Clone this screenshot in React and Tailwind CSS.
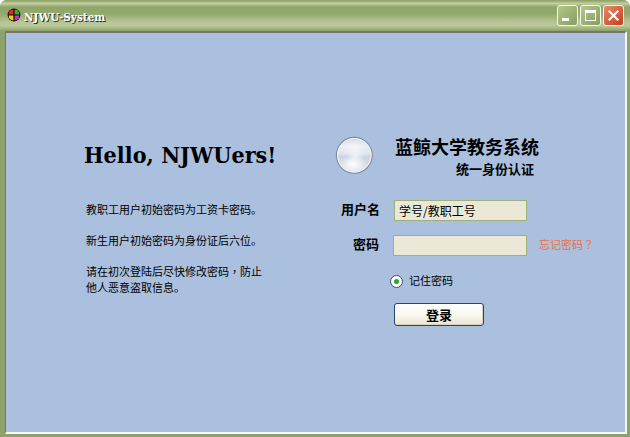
function AppIcon() {
  return (
    <svg className="-mt-px size-[14px] shrink-0" viewBox="0 0 14 14">
      <circle cx="7" cy="7" r="6.4" fill="#111" />
      <path d="M6.4 6.4V1.6A5 5 0 0 0 1.6 6.4Z" fill="#e42a1c" />
      <path d="M7.6 6.4V1.6a5 5 0 0 1 4.8 4.8Z" fill="#38a838" />
      <path d="M6.4 7.6v4.8A5 5 0 0 1 1.6 7.6Z" fill="#e6d21c" />
      <path d="M7.6 7.6v4.8a5 5 0 0 0 4.8-4.8Z" fill="#c92bc9" />
    </svg>
  );
}

function Orb() {
  return (
    <svg className="size-[38px] shrink-0" viewBox="0 0 38 38">
      <defs>
        <linearGradient id="orb" x1="0" y1="0" x2="0" y2="1">
          <stop offset="0" stopColor="#d3dae4" />
          <stop offset=".25" stopColor="#e8ecf2" />
          <stop offset=".46" stopColor="#e0e5ed" />
          <stop offset=".54" stopColor="#ccd4e0" />
          <stop offset="1" stopColor="#e3e8ef" />
        </linearGradient>
        <radialGradient id="glow">
          <stop offset="0" stopColor="#fff" />
          <stop offset="1" stopColor="#fff" stopOpacity="0" />
        </radialGradient>
      </defs>
      <circle cx="19.3" cy="19.3" r="17.9" fill="url(#orb)" stroke="#7f8da6" strokeWidth="1.2" />
      <circle cx="19.3" cy="19.3" r="16.8" fill="none" stroke="#f1f4f8" strokeWidth="1" />
      <ellipse cx="18" cy="28" rx="14" ry="9" fill="url(#glow)" />
      <ellipse cx="21" cy="20" rx="9" ry="7" fill="url(#glow)" opacity=".6" />
      <ellipse cx="19" cy="12" rx="14" ry="8" fill="url(#glow)" opacity=".6" />
    </svg>
  );
}

const controlBase = "flex size-[21px] items-center justify-center rounded-[3px] border border-[#f4f8e6]";
const controlGreen = " bg-linear-to-br from-[#b5c68c] to-[#869e60]";

function WindowControls() {
  return (
    <div className="flex gap-[2px]">
      <button className={controlBase + controlGreen}>
        <svg className="size-[19px]" viewBox="0 0 19 19"><path d="M4 12h7v3H4z" fill="#fff" /></svg>
      </button>
      <button className={controlBase + controlGreen}>
        <svg className="size-[19px]" viewBox="0 0 19 19"><path d="M4 4h11v11H4zM5 7v7h9V7z" fill="#fff" fillRule="evenodd" /></svg>
      </button>
      <button className={controlBase + " bg-linear-to-br from-[#e8886a] to-[#c33a1c]"}>
        <svg className="size-[19px]" viewBox="0 0 19 19"><path d="M4.7 4.7l9.6 9.6M14.3 4.7l-9.6 9.6" stroke="#fff" strokeWidth="2.2" /></svg>
      </button>
    </div>
  );
}

function Notice() {
  return (
    <section className="w-[252px] shrink-0 pl-[78px] pt-[106px]">
      <h1 className="h-8 whitespace-nowrap font-['DejaVu_Serif_Condensed','DejaVu_Serif'] text-[23px] font-bold leading-8 tracking-[0.07px] [font-stretch:condensed]">
        Hello, NJWUers!
      </h1>
      <div className="flex w-[190px] flex-col gap-[15px] pl-[2px] pt-[30px] text-[11px] leading-4">
        <p>教职工用户初始密码为工资卡密码。</p>
        <p>新生用户初始密码为身份证后六位。</p>
        <p>请在初次登陆后尽快修改密码<span lang="zh-TW" className="font-['Noto_Sans_CJK_TC',sans-serif]">，</span>防止<br />他人恶意盗取信息。</p>
      </div>
    </section>
  );
}

function LoginForm() {
  return (
    <section className="ml-[77px] pt-[102px]">
      <header className="flex">
        <div className="pt-px">
          <Orb />
        </div>
        <div className="w-[205px] pl-[22px] font-bold">
          <h2 className="whitespace-nowrap text-[18px] leading-[22px]">蓝鲸大学教务系统</h2>
          <p className="pl-[61px] text-[13px] leading-6">统一身份认证</p>
        </div>
      </header>
      <div className="mt-[19px] flex h-[21px] items-center">
        <label className="-mt-[3px] w-[45px] text-right text-[13px] font-bold leading-5">用户名</label>
        <input
          className="ml-[14px] h-[21px] w-[133px] border border-[#9fb17b] bg-[#ebe8d7] px-1 text-[12px] leading-[19px] outline-none"
          defaultValue="学号/教职工号"
        />
      </div>
      <div className="mt-[14px] flex h-[21px] items-center">
        <label className="-mt-[3px] w-[44px] text-right text-[13px] font-bold leading-5">密码</label>
        <input type="password" className="ml-[14px] h-[21px] w-[134px] border border-[#9fb17b] bg-[#ebe8d7] px-1 outline-none" />
        <a className="-mt-[3px] ml-3 text-[11px] leading-4 text-[#ee7049]">忘记密码<span lang="zh-TW" className="font-['Noto_Sans_CJK_TC',sans-serif]">？</span></a>
      </div>
      <label className="mt-[18px] flex h-[14px] items-center gap-[6px] pl-[55px] text-[11px] leading-[14px]">
        <span className="flex size-[13px] items-center justify-center rounded-full border border-[#28527f] bg-white">
          <span className="size-[5px] rounded-full bg-[#2da32d]" />
        </span>
        <span className="-mt-[3px]">记住密码</span>
      </label>
      <button className="ml-[59px] mt-[15px] flex h-[23px] w-[90px] items-center justify-center rounded-[3px] border border-[#24466f] bg-linear-to-b from-white via-[#faf9f1] to-[#e9e4d1] text-[13px] font-bold leading-5 shadow-[inset_-1px_-1px_0_#d8d2bd]">
        登录
      </button>
    </section>
  );
}

export default function App() {
  return (
    <div className="bg-white font-['Noto_Sans_CJK_SC',sans-serif] text-black">
      <div className="flex h-[437px] w-[630px] flex-col overflow-hidden rounded-t-[7px] bg-[#8ca26a]">
        <div className="flex h-[31px] shrink-0 items-center bg-[linear-gradient(180deg,#8b9f68_0,#a9b986_7%,#c3cf9f_11%,#90a56b_23%,#94a970_45%,#b7c693_72%,#bac898_83%,#a0b27d_93%,#8a9e68_100%)] pl-[7px] pr-[6px]">
          <AppIcon />
          <span className="flex-1 pl-[3px] pt-[3px] font-['DejaVu_Serif_Condensed','DejaVu_Serif'] text-[11.5px] font-bold leading-4 tracking-[0.05px] text-white [font-stretch:condensed] [text-shadow:1px_1px_0_#26301a]">
            NJWU-System
          </span>
          <WindowControls />
        </div>
        <main className="mb-[3px] ml-[5px] mr-[3px] flex min-h-0 flex-1 border-b-2 border-l border-r-2 border-t-2 border-b-[#f5f8f1] border-l-[#77756b] border-r-[#f5f8f1] border-t-[#77756b] bg-[#abc0de]">
          <Notice />
          <LoginForm />
        </main>
      </div>
    </div>
  );
}
